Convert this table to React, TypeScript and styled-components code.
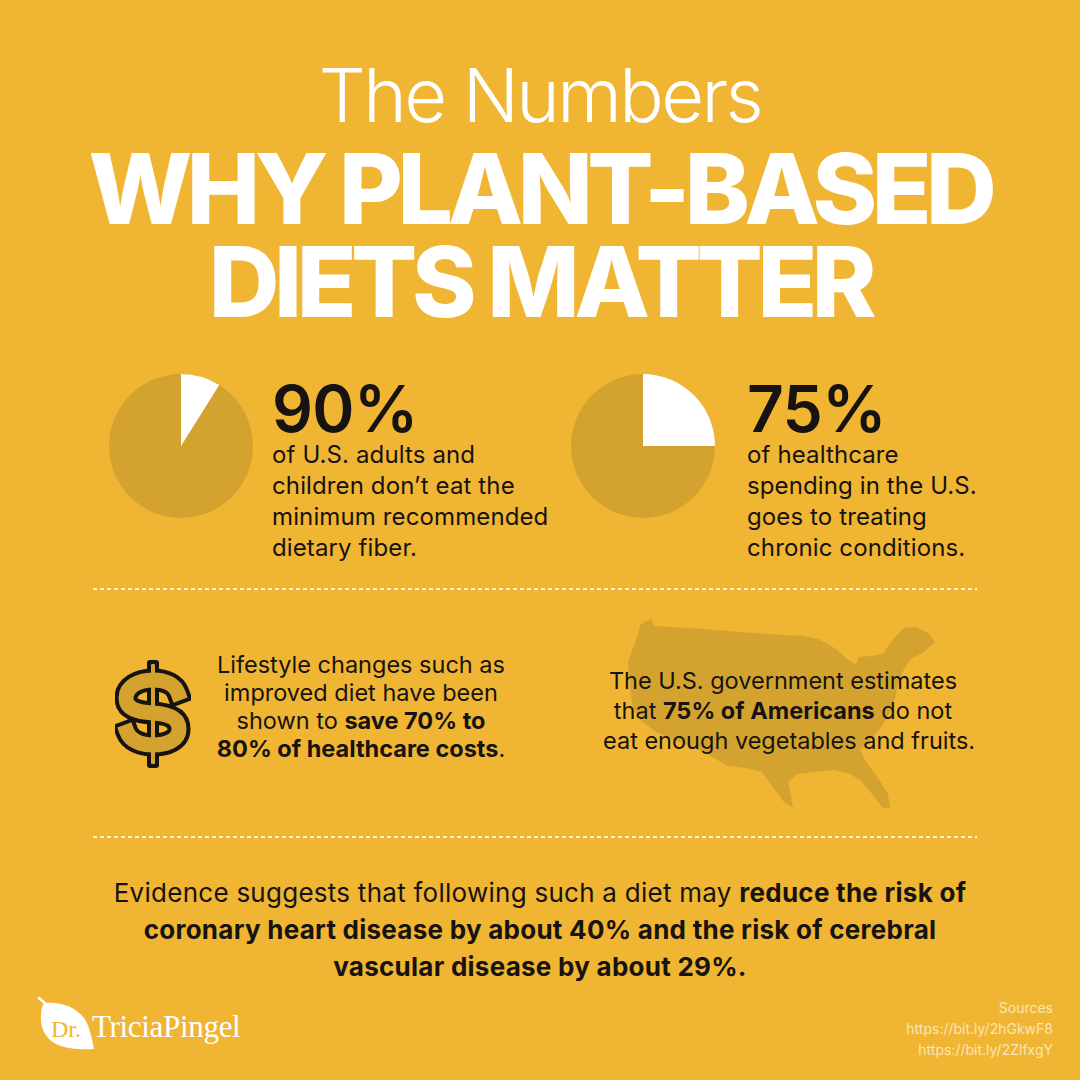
import React from 'react';
import styled, { createGlobalStyle } from 'styled-components';

const GlobalStyle = createGlobalStyle`
    html, body {
        margin: 0;
        padding: 0;
        background: #f0b533;
    }
    * {
        box-sizing: border-box;
    }
`;

const GOLD = '#f0b533';
const DARK_GOLD = '#d4a32f';
const INK = '#161310';

const Page = styled.div`
    width: 1080px;
    height: 1080px;
    background: ${GOLD};
    font-family: Inter, "Noto Sans", sans-serif;
    color: ${INK};
    display: flex;
    flex-direction: column;
    overflow: hidden;
`;

const Header = styled.header`
    padding-top: 58px;
    text-align: center;
    color: #fff;
`;

const Kicker = styled.div`
    font-size: 74px;
    font-weight: 300;
    line-height: 74px;
    letter-spacing: -0.035em;
`;

const Title = styled.h1`
    margin: 10px 0 0;
    font-size: 98px;
    font-weight: 800;
    line-height: 93px;
    letter-spacing: -0.055em;
`;

const StatsRow = styled.section`
    margin-top: 46px;
    padding-left: 109px;
    display: grid;
    grid-template-columns: 462px 1fr;
`;

const Stat = styled.div<{ $gap: number }>`
    display: flex;
    align-items: flex-start;
    gap: ${p => p.$gap}px;
`;

const StatText = styled.div`
    padding-top: 5px;
`;

const BigNumber = styled.div`
    font-size: 64px;
    font-weight: 600;
    line-height: 60px;
    letter-spacing: -0.01em;
`;

const StatBody = styled.p`
    margin: 0;
    font-size: 24px;
    line-height: 31px;
    letter-spacing: 0.005em;
`;

const Divider = styled.div<{ $top: number }>`
    margin: ${p => p.$top}px 0 0 93px;
    width: 884px;
    height: 2px;
    flex-shrink: 0;
    background: repeating-linear-gradient(to right, #fff3d2 0 4px, transparent 4px 7px);
`;

const MiddleRow = styled.section`
    margin-top: 24px;
    display: grid;
    grid-template-columns: 510px 1fr;
    align-items: center;
`;

const SavingsBlock = styled.div`
    display: flex;
    align-items: center;
    padding-left: 115px;
    gap: 22px;
`;

const CenteredText = styled.p<{ $width: number; $lh: number; $lift?: number }>`
    margin: 0 0 ${p => p.$lift ?? 0}px;
    width: ${p => p.$width}px;
    font-size: 23.5px;
    line-height: ${p => p.$lh}px;
    text-align: center;
    white-space: nowrap;
`;

const MapStack = styled.div`
    display: grid;
    width: 360px;
    margin-left: 93px;
    align-items: center;
    justify-items: center;
    & > * {
        grid-area: 1 / 1;
    }
`;

const Conclusion = styled.p`
    margin: 36px 0 0;
    font-size: 26px;
    line-height: 37px;
    letter-spacing: 0.01em;
    text-align: center;
`;

const Footer = styled.footer`
    margin-top: 12px;
    padding: 0 27px 0 38px;
    display: flex;
    justify-content: space-between;
    align-items: flex-start;
`;

const Logo = styled.div`
    display: flex;
    align-items: flex-end;
    color: #fff;
`;

const LogoName = styled.span`
    font-family: "Liberation Serif", "DejaVu Serif", serif;
    font-size: 31px;
    line-height: 31px;
    margin-left: -2px;
    margin-bottom: 9px;
    letter-spacing: -0.01em;
`;

const Sources = styled.div`
    text-align: right;
    font-size: 14px;
    line-height: 21px;
    color: #fbe6b4;
`;

const PieChart = ({ slice }: { slice: 'tenth' | 'quarter' }) => {
    const end = slice === 'quarter' ? '144 72' : '110.2 10.9';
    return (
        <svg width="144" height="144" viewBox="0 0 144 144">
            <circle cx="72" cy="72" r="72" fill={DARK_GOLD} />
            <path d={`M72 72 L72 0 A72 72 0 0 1 ${end} Z`} fill="#fff" />
        </svg>
    );
};

const DOLLAR_S = 'M63 34 C60 26 51 21 38 21 C23 21 11 28 11 39 C11 50 22 53 38 54 C54 55 64 59 64 70 C64 81 52 86 38 86 C25 86 15 81 12 73';

const DollarIcon = () => (
    <svg width="76" height="110" viewBox="0 0 76 110">
        <rect x="32" y="1" width="12" height="108" rx="3" fill={INK} />
        <path d={DOLLAR_S} fill="none" stroke={INK} strokeWidth="23" strokeLinecap="square" strokeLinejoin="round" />
        <rect x="36" y="5" width="4" height="100" rx="1" fill={DARK_GOLD} />
        <path d={DOLLAR_S} fill="none" stroke={DARK_GOLD} strokeWidth="15" strokeLinecap="square" strokeLinejoin="round" />
    </svg>
);

// rough outline of the lower 48 states, traced over the reference
const US_OUTLINE = [
    'M23 5 L26 12 L60 14 L100 17 L140 20 L175 22 L190 25 L198 29',
    'L208 35 L220 46 L228 50 L231 43 L243 42 L255 40 L266 24 L276 14 L288 13 L300 19 L307 28',
    'L296 38 L283 45 L275 57 L270 70 L267 84 L262 98 L254 112 L244 124 L232 136',
    'L238 148 L250 164 L260 180 L262 194 L255 194 L244 180 L232 166 L222 160',
    'L206 156 L186 158 L170 160 L160 168 L163 182 L165 194 L156 188 L144 172 L134 158',
    'L118 154 L100 152 L84 143 L62 132 L46 126 L28 118 L12 106 L4 90 L2 72 L0 48 L8 26 L13 10 Z',
].join(' ');

const UsMap = () => (
    <svg width="310" height="200" viewBox="0 0 310 200">
        <path d={US_OUTLINE} fill={DARK_GOLD} />
    </svg>
);

const LeafMark = () => (
    <svg width="56" height="54" viewBox="0 0 56 54">
        <path d="M1 1 L9 8" stroke="#fff" strokeWidth="2.5" strokeLinecap="round" />
        <path d="M6 6 C22 4 40 10 48 24 C52 32 54 42 56 52 C44 53 30 52 20 48 C8 43 2 31 3 19 C3 13 4 9 6 6 Z" fill="#fff" />
        <text x="13" y="40" fontFamily="Liberation Serif, DejaVu Serif, serif" fontSize="24" fill={GOLD}>Dr.</text>
    </svg>
);

export default function App() {
    return (
        <>
            <GlobalStyle />
            <Page>
                <Header>
                    <Kicker>The Numbers</Kicker>
                    <Title>WHY PLANT-BASED<br />DIETS MATTER</Title>
                </Header>

                <StatsRow>
                    <Stat $gap={19}>
                        <PieChart slice="tenth" />
                        <StatText>
                            <BigNumber>90%</BigNumber>
                            <StatBody>of U.S. adults and<br />children don’t eat the<br />minimum recommended<br />dietary fiber.</StatBody>
                        </StatText>
                    </Stat>
                    <Stat $gap={32}>
                        <PieChart slice="quarter" />
                        <StatText>
                            <BigNumber>75%</BigNumber>
                            <StatBody>of healthcare<br />spending in the U.S.<br />goes to treating<br />chronic conditions.</StatBody>
                        </StatText>
                    </Stat>
                </StatsRow>

                <Divider $top={25} />

                <MiddleRow>
                    <SavingsBlock>
                        <DollarIcon />
                        <CenteredText $width={296} $lh={28} $lift={14}>
                            Lifestyle changes such as<br />improved diet have been<br />shown to <b>save 70% to<br />80% of healthcare costs</b>.
                        </CenteredText>
                    </SavingsBlock>
                    <MapStack>
                        <UsMap />
                        <CenteredText $width={360} $lh={30} $lift={6}>
                            The U.S. government estimates<br />that <b>75% of Americans</b> do not<br />eat enough vegetables and fruits.
                        </CenteredText>
                    </MapStack>
                </MiddleRow>

                <Divider $top={22} />

                <Conclusion>
                    Evidence suggests that following such a diet may <b>reduce the risk of<br />coronary heart disease by about 40% and the risk of cerebral<br />vascular disease by about 29%.</b>
                </Conclusion>

                <Footer>
                    <Logo>
                        <LeafMark />
                        <LogoName>TriciaPingel</LogoName>
                    </Logo>
                    <Sources>
                        Sources<br />https://bit.ly/2hGkwF8<br />https://bit.ly/2ZlfxgY
                    </Sources>
                </Footer>
            </Page>
        </>
    );
}
